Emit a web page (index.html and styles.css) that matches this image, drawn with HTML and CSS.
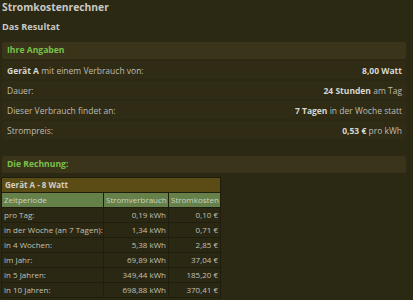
FILE: index.html
```html
<!DOCTYPE html>
<html lang="de">
<head>
<meta charset="utf-8">
<title>Stromkostenrechner</title>
<link rel="stylesheet" href="styles.css">
</head>
<body>
<h1 class="title">Stromkostenrechner</h1>
<h2 class="subtitle">Das Resultat</h2>
<div class="bar">Ihre Angaben</div>
<div class="rows">
  <div class="row"><span><b>Gerät A</b> mit einem Verbrauch von:</span><span><b>8,00 Watt</b></span></div>
  <div class="row"><span>Dauer:</span><span><b>24 Stunden</b> am Tag</span></div>
  <div class="row"><span>Dieser Verbrauch findet an:</span><span><b>7 Tagen</b> in der Woche statt</span></div>
  <div class="row"><span>Strompreis:</span><span><b>0,53 €</b> pro kWh</span></div>
</div>
<div class="bar bar-second">Die Rechnung:</div>
<table class="calc">
  <colgroup><col class="c1"><col class="c2"><col class="c3"></colgroup>
  <tr><th class="caption" colspan="3">Gerät A - 8 Watt</th></tr>
  <tr class="head"><td>Zeitperiode</td><td>Stromverbrauch</td><td>Stromkosten</td></tr>
  <tr><td>pro Tag:</td><td class="num">0,19 kWh</td><td class="num">0,10 €</td></tr>
  <tr><td>in der Woche (an 7 Tagen):</td><td class="num">1,34 kWh</td><td class="num">0,71 €</td></tr>
  <tr><td>in 4 Wochen:</td><td class="num">5,38 kWh</td><td class="num">2,85 €</td></tr>
  <tr><td>im Jahr:</td><td class="num">69,89 kWh</td><td class="num">37,04 €</td></tr>
  <tr><td>in 5 Jahren:</td><td class="num">349,44 kWh</td><td class="num">185,20 €</td></tr>
  <tr><td>in 10 Jahren:</td><td class="num">698,88 kWh</td><td class="num">370,41 €</td></tr>
</table>
</body>
</html>
```
FILE: styles.css
```css
html, body {
  margin: 0;
  padding: 0;
}
body {
  background: #2b2813;
  color: #bdbcb2;
  font-family: "Open Sans", "Noto Sans", sans-serif;
  font-size: 8.5px;
  width: 413px;
  height: 300px;
  overflow: hidden;
}
b {
  color: #d6d6d0;
  font-weight: bold;
}
.title {
  margin: 0;
  padding: 0 0 0 2px;
  font-size: 10.3px;
  line-height: 14px;
  font-weight: bold;
  color: #c9c9c4;
}
.subtitle {
  margin: 6px 0 0;
  padding-left: 2px;
  font-size: 9.2px;
  line-height: 14px;
  font-weight: bold;
  color: #c9c9c4;
}
.bar {
  margin: 8px 7px 0 2px;
  height: 17px;
  line-height: 17px;
  padding-left: 5px;
  background: #39341a;
  border-radius: 2px;
  color: #79c14a;
  font-weight: bold;
  font-size: 8.6px;
}
.rows {
  display: flex;
  flex-direction: column;
  gap: 2px;
  margin: 2px 7px 0 2px;
}
.row {
  display: flex;
  justify-content: space-between;
  align-items: center;
  height: 18px;
  padding: 0 4px 0 5px;
  background: #2f2b15;
  border-radius: 2px;
}
.bar-second {
  margin-top: 17px;
}
.calc {
  margin: 4px 0 0 1px;
  border-collapse: separate;
  border-spacing: 1px;
  background: #1f1d0e;
  font-size: 8px;
  table-layout: fixed;
  width: 219px;
}
.calc col.c1 { width: 101px; }
.calc col.c2 { width: 64px; }
.calc col.c3 { width: 51px; }
.calc td, .calc th {
  height: 14px;
  padding: 0 1px 0 2px;
  line-height: 14px;
  white-space: nowrap;
  background: #2a2712;
  color: #c2c1b7;
}
.calc th.caption {
  text-align: left;
  background: #5b4c15;
  color: #d2d0c4;
  font-weight: bold;
  padding-left: 3px;
}
.calc .head td {
  background: #66804a;
  color: #cbd2be;
}
.calc .num {
  text-align: right;
  padding-right: 2px;
}
```
